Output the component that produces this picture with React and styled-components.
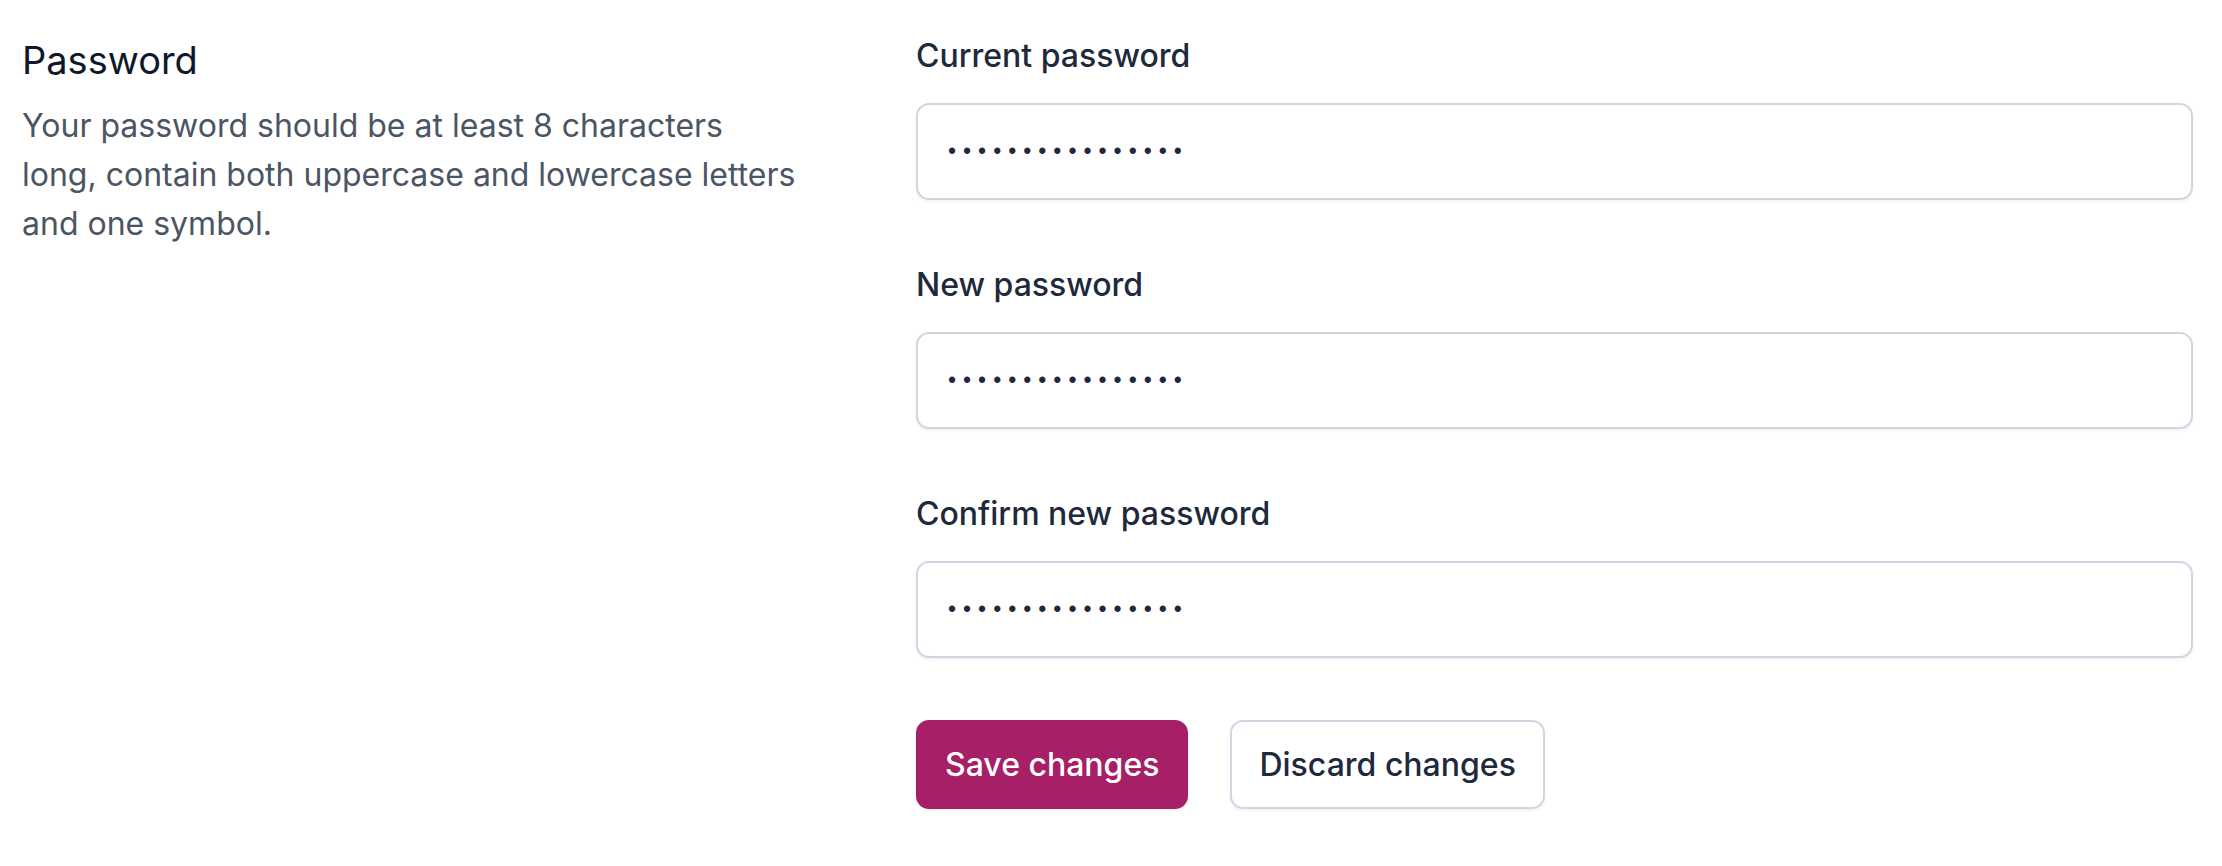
import styled, { createGlobalStyle } from "styled-components";

const GlobalStyle = createGlobalStyle`
  body {
    margin: 0;
    background: #ffffff;
    font-family: Inter, "Noto Sans", sans-serif;
  }
`;

const Section = styled.section`
  display: grid;
  grid-template-columns: 894px 1fr;
  padding: 32px 29px 40px 22px;
`;

const Intro = styled.div`
  display: flex;
  flex-direction: column;
  gap: 13px;
`;

const Title = styled.h2`
  margin: 0;
  font-size: 38px;
  line-height: 56px;
  font-weight: 400;
  color: #0f172a;
`;

const Description = styled.p`
  margin: 0;
  max-width: 776px;
  font-size: 32px;
  line-height: 49px;
  color: #4b5563;
`;

const Form = styled.form`
  display: flex;
  flex-direction: column;
  gap: 61px;
`;

const Field = styled.div`
  display: flex;
  flex-direction: column;
  gap: 23px;
`;

const Label = styled.label`
  font-size: 32px;
  line-height: 48px;
  font-weight: 500;
  color: #1e293b;
`;

const Input = styled.input`
  box-sizing: border-box;
  width: 100%;
  height: 97px;
  padding: 0 30px;
  border: 2px solid #cfd6e2;
  border-radius: 13px;
  background: #fff;
  box-shadow: 0 2px 3px rgba(15, 23, 42, 0.05);
  font-family: "Liberation Sans", sans-serif;
  font-size: 23px;
  letter-spacing: 7px;
  color: #1e293b;
  outline: none;
`;

const Actions = styled.div`
  display: flex;
  gap: 42px;
  margin-top: 1px;
`;

const Button = styled.button`
  box-sizing: border-box;
  height: 89px;
  padding: 0 27px;
  border-radius: 13px;
  font-family: Inter, "Noto Sans", sans-serif;
  font-size: 32px;
  font-weight: 500;
  cursor: pointer;
  border: 2px solid ${(p) => (p.$primary ? "#a61f67" : "#cfd6e2")};
  background: ${(p) => (p.$primary ? "#a61f67" : "#ffffff")};
  color: ${(p) => (p.$primary ? "#ffffff" : "#1e293b")};
  box-shadow: 0 2px 3px rgba(15, 23, 42, 0.05);
`;

const fields = [
  { id: "current", label: "Current password" },
  { id: "new", label: "New password" },
  { id: "confirm", label: "Confirm new password" },
];

const App = () => {
  return (
    <>
      <GlobalStyle />
      <Section>
        <Intro>
          <Title>Password</Title>
          <Description>
            Your password should be at least 8 characters long, contain both
            uppercase and lowercase letters and one symbol.
          </Description>
        </Intro>
        <Form onSubmit={(e) => e.preventDefault()}>
          {fields.map((f) => (
            <Field key={f.id}>
              <Label htmlFor={f.id}>{f.label}</Label>
              <Input id={f.id} type="password" defaultValue="passwordpassword" />
            </Field>
          ))}
          <Actions>
            <Button type="submit" $primary>
              Save changes
            </Button>
            <Button type="button">Discard changes</Button>
          </Actions>
        </Form>
      </Section>
    </>
  );
};

export default App;
